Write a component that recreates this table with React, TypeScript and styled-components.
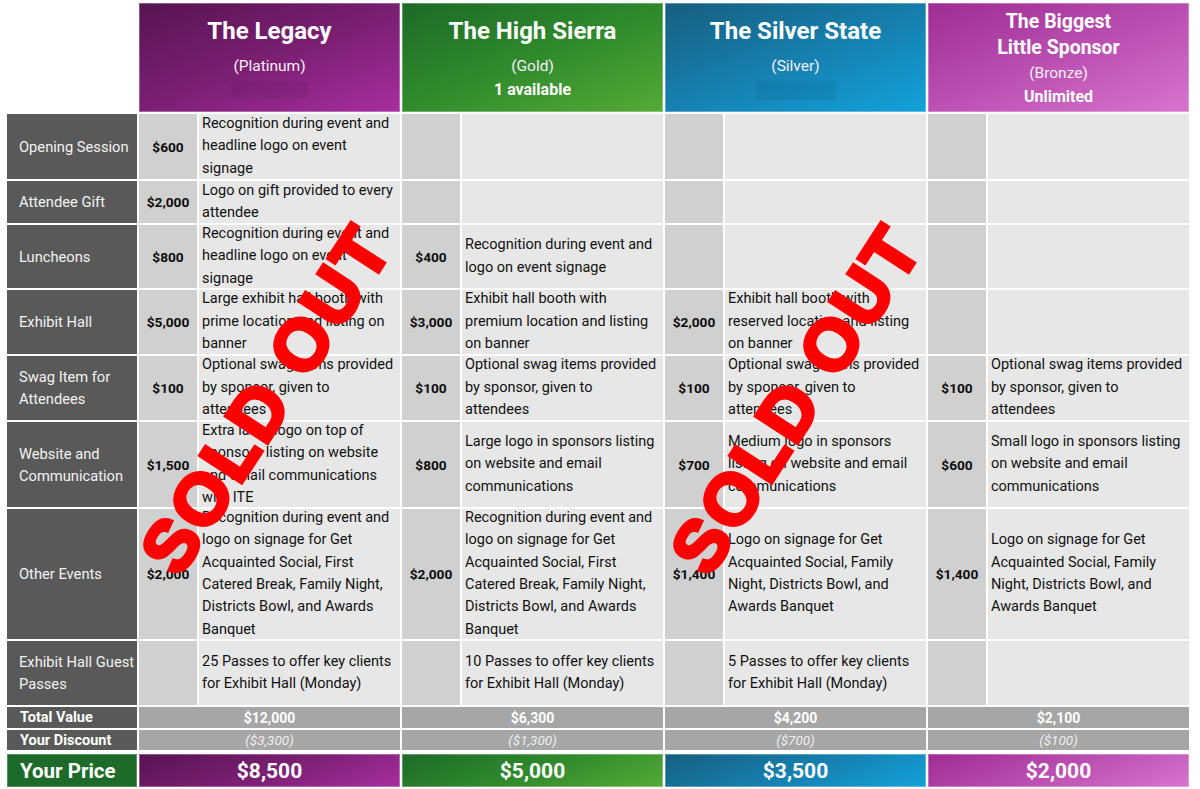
import React from 'react';
import styled, { createGlobalStyle } from 'styled-components';

const GlobalStyle = createGlobalStyle`
  html, body { margin: 0; padding: 0; background: #ffffff; }
  body { font-family: Roboto, "Liberation Sans", Arial, sans-serif; }
  * { box-sizing: border-box; }
`;

const Page = styled.div`
  width: 1200px;
  height: 789px;
  padding: 3px 0 0 7px;
  overflow: hidden;
`;

const Table = styled.div`
  position: relative;
  display: grid;
  grid-template-columns: 130px repeat(4, 58px 201px);
  grid-template-rows: 109px 65px 42px 63px 64px 64px 85px 130px 64px 21px 20px 0px 33px;
  gap: 2px;
  width: 1182px;
`;

const Corner = styled.div`
  background: #ffffff;
`;

const TierHeader = styled.div<{ $bg: string; $compact?: boolean }>`
  grid-column: span 2;
  background: ${(p) => p.$bg};
  box-shadow: inset 0 0 0 1px rgba(255, 255, 255, 0.3);
  color: #ffffff;
  text-align: center;
  display: flex;
  flex-direction: column;
  align-items: center;
  padding-top: ${(p) => (p.$compact ? '6px' : '13px')};
`;

const TierTitle = styled.div<{ $compact?: boolean }>`
  font-weight: 700;
  font-size: ${(p) => (p.$compact ? '19.5px' : '24px')};
  line-height: ${(p) => (p.$compact ? '26px' : '30px')};
`;

const TierLevel = styled.div<{ $compact?: boolean }>`
  margin-top: ${(p) => (p.$compact ? '0px' : '8px')};
  font-size: 15.5px;
  line-height: 24px;
  color: #f4eef4;
`;

const TierNote = styled.div`
  font-weight: 700;
  font-size: 16px;
  line-height: 24px;
  height: 24px;
  display: flex;
  align-items: center;
  justify-content: center;
`;

const Redacted = styled.span<{ $w: number; $h: number; $tint: string }>`
  display: inline-block;
  width: ${(p) => p.$w}px;
  height: ${(p) => p.$h}px;
  background: ${(p) => p.$tint};
`;

const RowLabel = styled.div`
  background: #595959;
  color: #f2f2f2;
  font-size: 14.7px;
  line-height: 22px;
  display: flex;
  align-items: center;
  padding-left: 12px;
`;

const PriceCell = styled.div`
  background: #d0d0d0;
  color: #0d0d0d;
  font-weight: 700;
  font-size: 13.7px;
  display: flex;
  align-items: center;
  justify-content: center;
`;

const DescCell = styled.div`
  background: #e7e7e7;
  color: #111111;
  font-size: 14.5px;
  line-height: 22.4px;
  display: flex;
  align-items: center;
  padding: 0 4px 0 3px;
`;

const SummaryLabel = styled.div`
  background: #595959;
  color: #ffffff;
  font-weight: 700;
  font-size: 14.5px;
  display: flex;
  align-items: center;
  padding-left: 13px;
`;

const SummaryCell = styled.div<{ $italic?: boolean }>`
  grid-column: span 2;
  background: #a6a6a6;
  color: ${(p) => (p.$italic ? '#eeeeee' : '#ffffff')};
  font-weight: ${(p) => (p.$italic ? 400 : 700)};
  font-style: ${(p) => (p.$italic ? 'italic' : 'normal')};
  font-size: ${(p) => (p.$italic ? '13.5px' : '14px')};
  display: flex;
  align-items: center;
  justify-content: center;
`;

const Spacer = styled.div`
  grid-column: 1 / -1;
`;

const PriceLabel = styled.div`
  background: #1d6b29;
  box-shadow: inset 0 0 0 1px rgba(255, 255, 255, 0.25);
  color: #ffffff;
  font-weight: 700;
  font-size: 20.5px;
  display: flex;
  align-items: center;
  padding-left: 13px;
`;

const PriceValue = styled.div<{ $bg: string }>`
  grid-column: span 2;
  background: ${(p) => p.$bg};
  box-shadow: inset 0 0 0 1px rgba(255, 255, 255, 0.3);
  color: #ffffff;
  font-weight: 700;
  font-size: 21px;
  display: flex;
  align-items: center;
  justify-content: center;
`;

const Stamp = styled.div`
  position: absolute;
  transform: translate(-50%, -50%) rotate(-57deg);
  font-family: "Liberation Sans", Arial, sans-serif;
  font-weight: 700;
  font-size: 72px;
  line-height: 1;
  letter-spacing: 3px;
  color: #ff0000;
  -webkit-text-stroke: 4px #ff0000;
  paint-order: stroke fill;
  white-space: nowrap;
  pointer-events: none;
`;

type Tier = {
  name: string[];
  level: string;
  note?: string;
  redact?: { w: number; h: number; tint: string };
  bg: string;
  total: string;
  discount: string;
  price: string;
  compact?: boolean;
};

const tiers: Tier[] = [
  {
    name: ['The Legacy'],
    level: '(Platinum)',
    redact: { w: 77, h: 16, tint: 'rgba(70, 10, 65, 0.1)' },
    bg: 'linear-gradient(160deg, #571451 0%, #7a1f72 50%, #a72e9f 100%)',
    total: '$12,000',
    discount: '($3,300)',
    price: '$8,500',
  },
  {
    name: ['The High Sierra'],
    level: '(Gold)',
    note: '1 available',
    bg: 'linear-gradient(160deg, #1d6a28 0%, #2f8a2c 50%, #55aa36 100%)',
    total: '$6,300',
    discount: '($1,300)',
    price: '$5,000',
  },
  {
    name: ['The Silver State'],
    level: '(Silver)',
    redact: { w: 80, h: 19, tint: 'rgba(10, 60, 100, 0.1)' },
    bg: 'linear-gradient(160deg, #175e7e 0%, #167fae 50%, #12a2da 100%)',
    total: '$4,200',
    discount: '($700)',
    price: '$3,500',
  },
  {
    name: ['The Biggest', 'Little Sponsor'],
    level: '(Bronze)',
    note: 'Unlimited',
    compact: true,
    bg: 'linear-gradient(160deg, #9e2c94 0%, #ba4fb1 50%, #d874ce 100%)',
    total: '$2,100',
    discount: '($100)',
    price: '$2,000',
  },
];

type Cell = [string, string] | null;

const otherLong =
  'Recognition during event and logo on signage for Get Acquainted Social, First Catered Break, Family Night, Districts Bowl, and Awards Banquet';
const otherShort =
  'Logo on signage for Get Acquainted Social, Family Night, Districts Bowl, and Awards Banquet';
const swag = 'Optional swag items provided by sponsor, given to attendees';

const rows: { label: string; cells: Cell[] }[] = [
  {
    label: 'Opening Session',
    cells: [['$600', 'Recognition during event and headline logo on event signage'], null, null, null],
  },
  {
    label: 'Attendee Gift',
    cells: [['$2,000', 'Logo on gift provided to every attendee'], null, null, null],
  },
  {
    label: 'Luncheons',
    cells: [
      ['$800', 'Recognition during event and headline logo on event signage'],
      ['$400', 'Recognition during event and logo on event signage'],
      null,
      null,
    ],
  },
  {
    label: 'Exhibit Hall',
    cells: [
      ['$5,000', 'Large exhibit hall booth with prime location and listing on banner'],
      ['$3,000', 'Exhibit hall booth with premium location and listing on banner'],
      ['$2,000', 'Exhibit hall booth with reserved location and listing on banner'],
      null,
    ],
  },
  {
    label: 'Swag Item for Attendees',
    cells: [
      ['$100', swag],
      ['$100', swag],
      ['$100', swag],
      ['$100', swag],
    ],
  },
  {
    label: 'Website and Communication',
    cells: [
      ['$1,500', 'Extra large logo on top of sponsors listing on website and email communications with ITE'],
      ['$800', 'Large logo in sponsors listing on website and email communications'],
      ['$700', 'Medium logo in sponsors listing on website and email communications'],
      ['$600', 'Small logo in sponsors listing on website and email communications'],
    ],
  },
  {
    label: 'Other Events',
    cells: [
      ['$2,000', otherLong],
      ['$2,000', otherLong],
      ['$1,400', otherShort],
      ['$1,400', otherShort],
    ],
  },
  {
    label: 'Exhibit Hall Guest Passes',
    cells: [
      ['', '25 Passes to offer key clients for Exhibit Hall (Monday)'],
      ['', '10 Passes to offer key clients for Exhibit Hall (Monday)'],
      ['', '5 Passes to offer key clients for Exhibit Hall (Monday)'],
      null,
    ],
  },
];

export default function App() {
  return (
    <Page>
      <GlobalStyle />
      <Table>
        <Corner />
        {tiers.map((t) => (
          <TierHeader key={t.level} $bg={t.bg} $compact={t.compact}>
            {t.name.map((n) => (
              <TierTitle key={n} $compact={t.compact}>
                {n}
              </TierTitle>
            ))}
            <TierLevel $compact={t.compact}>{t.level}</TierLevel>
            <TierNote>
              {t.note ? t.note : t.redact ? <Redacted $w={t.redact.w} $h={t.redact.h} $tint={t.redact.tint} /> : null}
            </TierNote>
          </TierHeader>
        ))}

        {rows.map((r) => (
          <React.Fragment key={r.label}>
            <RowLabel>{r.label}</RowLabel>
            {r.cells.map((c, i) => (
              <React.Fragment key={i}>
                <PriceCell>{c ? c[0] : ''}</PriceCell>
                <DescCell>{c ? c[1] : ''}</DescCell>
              </React.Fragment>
            ))}
          </React.Fragment>
        ))}

        <SummaryLabel>Total Value</SummaryLabel>
        {tiers.map((t) => (
          <SummaryCell key={t.level}>{t.total}</SummaryCell>
        ))}
        <SummaryLabel>Your Discount</SummaryLabel>
        {tiers.map((t) => (
          <SummaryCell key={t.level} $italic>
            {t.discount}
          </SummaryCell>
        ))}
        <Spacer />
        <PriceLabel>Your Price</PriceLabel>
        {tiers.map((t) => (
          <PriceValue key={t.level} $bg={t.bg}>
            {t.price}
          </PriceValue>
        ))}

        <Stamp style={{ left: 259, top: 396 }}>SOLD OUT</Stamp>
        <Stamp style={{ left: 789, top: 396 }}>SOLD OUT</Stamp>
      </Table>
    </Page>
  );
}
